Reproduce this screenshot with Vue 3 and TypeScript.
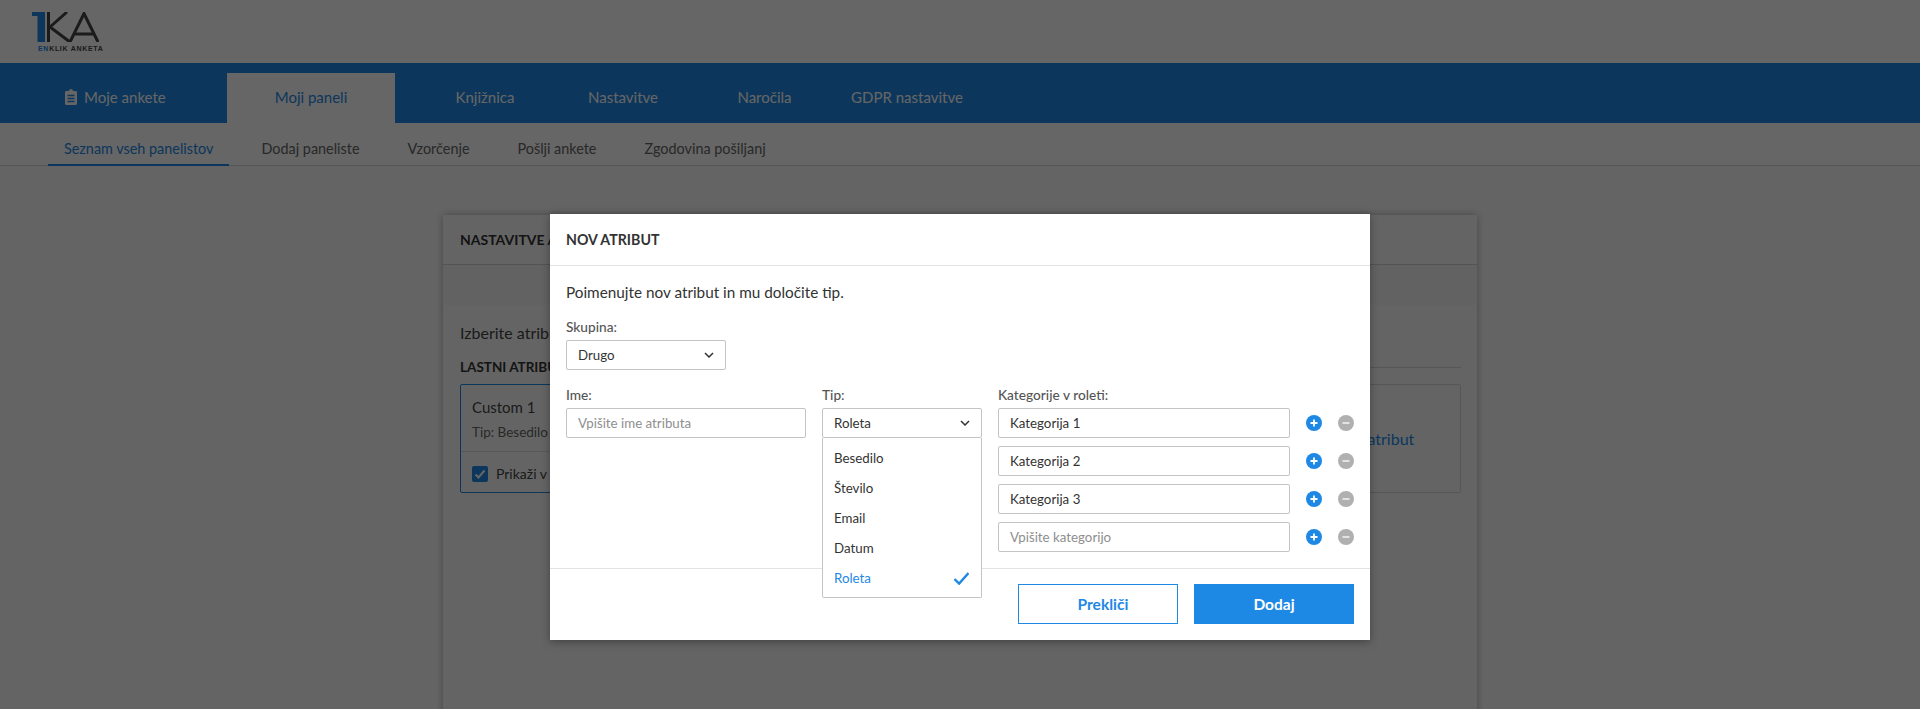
<script setup lang="ts">
const tabs = ['Knjižnica', 'Nastavitve', 'Naročila', 'GDPR nastavitve']
const subs = ['Seznam vseh panelistov', 'Dodaj paneliste', 'Vzorčenje', 'Pošlji ankete', 'Zgodovina pošiljanj']
const types = ['Besedilo', 'Število', 'Email', 'Datum', 'Roleta']
const cats = ['Kategorija 1', 'Kategorija 2', 'Kategorija 3', '']
</script>

<template>
  <div class="page">
    <header class="top">
      <svg class="logo" viewBox="0 0 68 30" width="68" height="30">
        <path d="M0 0H13V30H5.500V4H0Z" fill="#1e88e5" />
        <path d="M16.500 0V30M18 15L35 0M18 15L38 30" fill="none" stroke="#444" stroke-width="3" />
        <path d="M38 30L52 1.500L66 30M43 22H61" fill="none" stroke="#444" stroke-width="3" />
      </svg>
      <div class="logo-sub"><b>EN</b>KLIK ANKETA</div>
    </header>

    <nav class="tabs">
      <div class="tab tab-first">
        <svg class="clip" viewBox="0 0 12 16" width="12" height="16">
          <path d="M1.500 2H4C4 .8 5 0 6 0S8 .8 8 2H10.500C11.300 2 12 2.700 12 3.500V14.500C12 15.300 11.300 16 10.500 16H1.500C.7 16 0 15.300 0 14.500V3.500C0 2.700 .7 2 1.500 2Z" fill="#fff" />
          <path d="M2.500 6.500H9.500M2.500 9.500H9.500M2.500 12.500H9.500" stroke="#1e88e5" stroke-width="1.300" />
        </svg>
        Moje ankete
      </div>
      <div class="tab tab-active">Moji paneli</div>
      <div v-for="t in tabs" :key="t" class="tab tab-plain">{{ t }}</div>
    </nav>

    <nav class="subnav">
      <div v-for="(s, i) in subs" :key="s" class="sub" :class="{ 'sub-active': i === 0 }">{{ s }}</div>
    </nav>

    <main class="card">
      <div class="card-head">NASTAVITVE ATRIBUTOV</div>
      <div class="card-band"></div>
      <div class="card-body">
        <p class="intro">Izberite atribute, ki jih želite prikazati</p>
        <div class="section"><h3 class="section-title">LASTNI ATRIBUTI</h3><span class="section-line"></span></div>
        <div class="attrs">
          <div class="attr">
            <div class="attr-top">
              <div class="attr-name">Custom 1</div>
              <div class="attr-type">Tip: Besedilo</div>
            </div>
            <div class="attr-foot">
              <svg class="check" viewBox="0 0 16 16" width="16" height="16">
                <rect width="16" height="16" rx="2" fill="#1e88e5" />
                <path d="M3.500 8.500L6.500 11.500L12.500 4.500" fill="none" stroke="#fff" stroke-width="2" />
              </svg>
              Prikaži v tabeli
            </div>
          </div>
          <div class="attr attr-add">Dodaj nov atribut</div>
        </div>
      </div>
    </main>

    <div class="overlay">
      <section class="modal">
        <h2 class="modal-title">NOV ATRIBUT</h2>
        <div class="modal-body">
          <p class="lead">Poimenujte nov atribut in mu določite tip.</p>
          <label class="lbl lbl-group">Skupina:</label>
          <div class="select select-group">
            <span>Drugo</span>
            <svg class="chev" viewBox="0 0 10 6" width="10" height="6"><path d="M1 1L5 5L9 1" fill="none" stroke="#333" stroke-width="1.500" /></svg>
          </div>
          <div class="cols">
            <div class="col-name">
              <label class="lbl">Ime:</label>
              <input class="field" placeholder="Vpišite ime atributa" readonly />
            </div>
            <div class="col-type">
              <label class="lbl">Tip:</label>
              <div class="select">
                <span>Roleta</span>
                <svg class="chev" viewBox="0 0 10 6" width="10" height="6"><path d="M1 1L5 5L9 1" fill="none" stroke="#333" stroke-width="1.500" /></svg>
              </div>
              <ul class="menu">
                <li v-for="t in types" :key="t" class="opt" :class="{ 'opt-on': t === 'Roleta' }">
                  {{ t }}
                  <svg v-if="t === 'Roleta'" viewBox="0 0 14 12" width="15" height="13"><path d="M.5 6.500L4.800 10.800L13.500 1" fill="none" stroke="#1e88e5" stroke-width="2.200" /></svg>
                </li>
              </ul>
            </div>
            <div class="col-cats">
              <label class="lbl">Kategorije v roleti:</label>
              <div v-for="(c, i) in cats" :key="i" class="cat">
                <input class="field field-cat" :value="c" placeholder="Vpišite kategorijo" readonly />
                <svg class="round" viewBox="0 0 16 16" width="16" height="16">
                  <circle cx="8" cy="8" r="8" fill="#1e88e5" />
                  <path d="M4.500 8H11.500M8 4.500V11.500" stroke="#fff" stroke-width="1.800" />
                </svg>
                <svg class="round" viewBox="0 0 16 16" width="16" height="16">
                  <circle cx="8" cy="8" r="8" fill="#b0b0b0" />
                  <path d="M4.500 8H11.500" stroke="#e8e8e8" stroke-width="1.800" />
                </svg>
              </div>
            </div>
          </div>
        </div>
        <footer class="modal-foot">
          <button class="btn btn-ghost">Prekliči</button>
          <button class="btn btn-solid">Dodaj</button>
        </footer>
      </section>
    </div>
  </div>
</template>

<style>
html, body { margin: 0; height: 709px; overflow: hidden; }
</style>

<style scoped>
.page {
  position: relative;
  height: 709px;
  overflow: hidden;
  background: #fbfbfb;
  font-family: Lato, "Noto Sans", sans-serif;
  color: #333;
}
.top {
  height: 63px;
  box-sizing: border-box;
  padding: 12px 0 0 32px;
  background: #fff;
}
.logo { display: block; }
.logo-sub {
  font-family: "Liberation Sans", sans-serif;
  font-size: 7px;
  font-weight: 700;
  letter-spacing: .7px;
  line-height: 8px;
  margin: 3px 0 0 6px;
  color: #444;
}
.logo-sub b { color: #1e88e5; }
.tabs {
  display: flex;
  height: 60px;
  background: #1e88e5;
  font-size: 15px;
  color: #fff;
}
.tab {
  display: flex;
  align-items: center;
  justify-content: center;
  white-space: nowrap;
  margin-top: 10px;
  padding-bottom: 3px;
  box-sizing: border-box;
}
.tab-first { width: 227px; justify-content: flex-start; padding-left: 65px; }
.clip { margin-right: 7px; }
.tab-active { width: 168px; background: #fff; color: #1e88e5; }
.tab-plain:nth-child(3) { width: 180px; }
.tab-plain:nth-child(4) { width: 96px; }
.tab-plain:nth-child(5) { width: 187px; }
.tab-plain:nth-child(6) { width: 98px; }
.subnav {
  display: flex;
  gap: 16px;
  height: 43px;
  box-sizing: border-box;
  padding-left: 48px;
  background: #fff;
  border-bottom: 1px solid #d8d8d8;
  font-size: 14.400px;
}
.sub { padding: 17px 16px 0; height: 43px; box-sizing: border-box; white-space: nowrap; color: #666; }
.sub-active { color: #1e88e5; border-bottom: 2px solid #1e88e5; }
.card {
  width: 1034px;
  height: 600px;
  margin: 49px auto 0;
  background: #fbfbfb;
  box-shadow: 0 0 8px rgba(0, 0, 0, .3);
}
.card-head {
  height: 50px;
  box-sizing: border-box;
  padding: 15px 17px 0;
  border-bottom: 1px solid #d0d0d0;
  font-size: 14px;
  line-height: 20px;
  font-weight: 700;
  color: #333;
}
.card-band { height: 40px; background: #f5f5f5; }
.card-body { padding: 0 16px 0 17px; }
.intro { margin: 18px 0 0; font-size: 16px; line-height: 20px; color: #444; }
.section { display: flex; align-items: center; gap: 8px; margin-top: 16px; }
.section-title {
  margin: 0;
  font-size: 13.500px;
  line-height: 16px;
  font-weight: 700;
  color: #333;
  white-space: nowrap;
}
.section-line { flex: 1; height: 1px; background: #d8d8d8; }
.attrs { display: flex; justify-content: space-between; margin-top: 9px; }
.attr {
  width: 238px;
  height: 109px;
  box-sizing: border-box;
  border: 1px solid #1e88e5;
  border-radius: 2px;
}
.attr-top { height: 67px; box-sizing: border-box; padding: 12px 11px 0; border-bottom: 1px solid #ddd; }
.attr-name { font-size: 15px; line-height: 20px; color: #444; }
.attr-type { margin-top: 6px; font-size: 13.500px; line-height: 18px; color: #666; }
.attr-foot { display: flex; align-items: center; gap: 8px; padding: 13px 11px 0; font-size: 14px; color: #444; }
.attr-add {
  display: flex;
  align-items: center;
  justify-content: center;
  padding-left: 22px;
  border-color: #d8d8d8;
  font-size: 16px;
  color: #1e88e5;
}
.overlay {
  position: absolute;
  inset: 0;
  background: rgba(0, 0, 0, .6);
}
.modal {
  width: 820px;
  height: 426px;
  margin: 214px auto 0;
  background: #fff;
  box-shadow: 0 2px 8px rgba(0, 0, 0, .35);
  display: flex;
  flex-direction: column;
}
.modal-title {
  margin: 0;
  height: 52px;
  box-sizing: border-box;
  padding: 16px 16px 0;
  border-bottom: 1px solid #e3e3e3;
  font-size: 14.200px;
  line-height: 20px;
  font-weight: 700;
  color: #333;
}
.modal-body { flex: 1; padding: 16px 16px 0; }
.lead { margin: 0; font-size: 15.300px; line-height: 20px; color: #333; }
.lbl {
  display: block;
  font-size: 13.700px;
  line-height: 16px;
  color: #555;
  font-weight: 500;
  height: 21px;
}
.lbl-group { margin-top: 17px; }
.select {
  width: 160px;
  height: 30px;
  box-sizing: border-box;
  padding: 0 11px;
  display: flex;
  align-items: center;
  justify-content: space-between;
  border: 1px solid #c4c4c4;
  border-radius: 2px;
  font-size: 13.300px;
  color: #333;
  background: #fff;
}
.cols { display: flex; margin-top: 17px; }
.col-name { flex: none; width: 240px; margin-right: 16px; }
.col-type { flex: none; width: 160px; margin-right: 16px; position: relative; }
.col-cats { flex: none; width: 356px; }
.field {
  display: block;
  width: 100%;
  height: 30px;
  box-sizing: border-box;
  padding: 0 11px;
  border: 1px solid #c4c4c4;
  border-radius: 2px;
  outline: none;
  font: 13.300px Lato, "Noto Sans", sans-serif;
  color: #333;
  background: #fff;
}
.field::placeholder { color: #8e8e8e; opacity: 1; }
.menu {
  position: absolute;
  z-index: 2;
  left: 0;
  top: 51px;
  width: 160px;
  height: 160px;
  box-sizing: border-box;
  margin: 0;
  padding: 5px 0 0;
  list-style: none;
  background: #fff;
  border: 1px solid #c4c4c4;
  border-top: 0;
  border-radius: 0 0 2px 2px;
}
.opt {
  height: 30px;
  padding: 0 12px 0 11px;
  display: flex;
  align-items: center;
  justify-content: space-between;
  font-size: 13.300px;
  color: #333;
}
.opt-on { color: #1e88e5; }
.cat { display: flex; align-items: center; height: 30px; margin-bottom: 8px; }
.field-cat { flex: none; width: 292px; margin-right: 16px; }
.round { flex: none; }
.round + .round { margin-left: 16px; }
.modal-foot {
  height: 72px;
  box-sizing: border-box;
  padding-top: 15px;
  padding-right: 16px;
  border-top: 1px solid #e3e3e3;
  display: flex;
  justify-content: flex-end;
  gap: 16px;
}
.btn {
  width: 160px;
  height: 40px;
  box-sizing: border-box;
  border: 1px solid #1e88e5;
  border-radius: 0;
  font: 700 15.500px Lato, "Noto Sans", sans-serif;
}
.btn-ghost { background: #fff; color: #1e88e5; padding-left: 16px; }
.btn-solid { background: #1e88e5; color: #fff; }
</style>
